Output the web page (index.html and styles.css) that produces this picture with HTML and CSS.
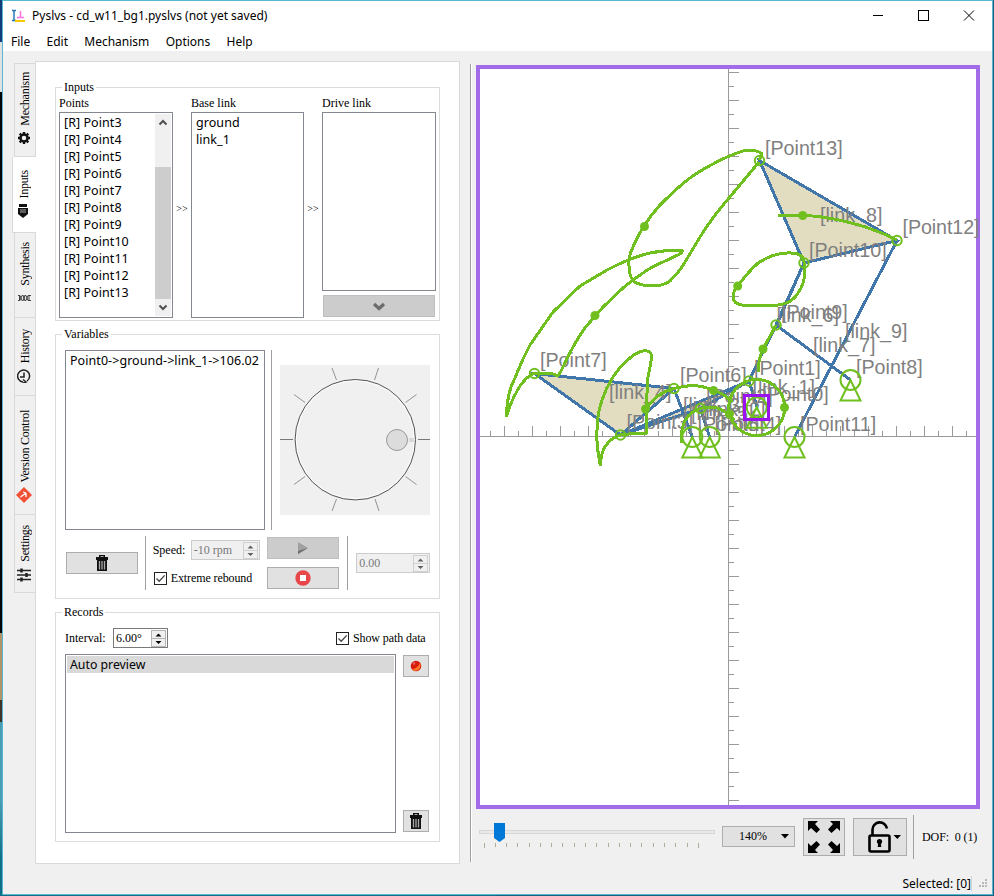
FILE: index.html
```html
<!DOCTYPE html>
<html lang="en">
<head>
<meta charset="utf-8">
<title>Pyslvs</title>
<link rel="stylesheet" href="styles.css">
</head>
<body>
<svg width="0" height="0" class="defs">
  <defs>
    <g id="trash"><path fill="#111" d="M4 0h6v2h3v3H1V2h3zM5.500 1.200v.8h3v-.8zM2 5h10v11H2z"/><path stroke="#aaa" stroke-width="1.300" d="M4.500 6v8.500M7 6v8.500M9.500 6v8.500"/></g>
    <g id="check"><rect x=".5" y=".5" width="12" height="12" fill="#fff" stroke="#222"/><path d="M2.500 6.500l2.700 2.700 5.500-5.800" fill="none" stroke="#444" stroke-width="1.300"/></g>
    <g id="ground" fill="none"><circle r="10"/><path d="M0 0L-10 20.500H10z"/></g>
  </defs>
</svg>
<div class="window">
  <header class="titlebar">
    <svg class="logo" width="13" height="14" viewBox="0 0 13 14"><path d="M0 1.500h4M2 1v11M0 11.500h4" stroke="#2878b8" fill="none" stroke-width="1.500"/><path d="M8.500 2v6M5 8.500h7" stroke="#ff70e0" stroke-width="1.500"/><path d="M3 12h10" stroke="#f5c800" stroke-width="2"/></svg>
    <span class="caption">Pyslvs - cd_w11_bg1.pyslvs (not yet saved)</span>
    <svg class="winbtns" width="104" height="12" viewBox="0 0 104 12" fill="none" stroke="#000"><path d="M0 5.500h10"/><rect x="45.500" y=".5" width="10" height="10"/><path d="M91 .5l10 10M101 .5l-10 10"/></svg>
  </header>
  <nav class="menu"><span class="m1">File</span><span class="m2">Edit</span><span class="m3">Mechanism</span><span class="m4">Options</span><span class="m5">Help</span></nav>

  <main class="main">
    <div class="tabs">
      <div class="tab t1"><span>Mechanism</span><svg width="12" height="12" viewBox="-6 -6 12 12"><circle r="3.500" fill="none" stroke="#111" stroke-width="2.400"/><path d="M0-6v2M0 4v2M-6 0h2M4 0h2M-4.300-4.300l1.500 1.500M2.800 2.800l1.500 1.500M4.300-4.300L2.800-2.800M-2.800 2.800l-1.500 1.500" stroke="#111" stroke-width="2.400"/></svg></div>
      <div class="tab t2 active"><span>Inputs</span><svg width="10" height="14" viewBox="0 0 10 14"><path d="M1 0h8v3H1zM0 4h10v6l-5 4-5-4z" fill="#111"/><path d="M3 5v4M5 5v4M7 5v4" stroke="#aaa"/></svg></div>
      <div class="tab t3"><span>Synthesis</span><svg width="13" height="6" viewBox="0 0 13 6"><path d="M0 .5h2l2 5h1l2-5h1l2 5h3M0 5.500h2l2-5h1l2 5h1l2-5h3M1.500 0v6M6 0v6M11 0v6" fill="none" stroke="#444"/></svg></div>
      <div class="tab t4"><span>History</span><svg width="14" height="14" viewBox="0 0 14 14"><path d="M4 12A6 6 0 1 1 8 13M7 3.500V8h4M8 10.500L5 13l3 1" fill="none" stroke="#222" stroke-width="1.500" transform="matrix(-1 0 0 1 14 0)"/></svg></div>
      <div class="tab t5"><span>Version Control</span><svg width="16" height="16" viewBox="0 0 16 16"><path d="M8 0l8 8-8 8-8-8z" fill="#f05033"/><path d="M4.500 10L10 6M10 6L7 5M10 6v4" stroke="#fff" stroke-width="1.300"/></svg></div>
      <div class="tab t6"><span>Settings</span><svg width="14" height="14" viewBox="0 0 14 14"><path d="M0 2.500h14M0 7h14M0 11.500h14" stroke="#222" stroke-width="1.500"/><path d="M4.500.5v4M9.500 5v4M4.500 9.500v4" stroke="#222" stroke-width="2.500"/></svg></div>
    </div>

    <section class="panel">
      <div class="group inputs">
        <div class="legend">Inputs</div>
        <div class="col">
          <div class="lab">Points</div>
          <div class="list points">
            <div class="rows"><div>[R] Point3</div><div>[R] Point4</div><div>[R] Point5</div><div>[R] Point6</div><div>[R] Point7</div><div>[R] Point8</div><div>[R] Point9</div><div>[R] Point10</div><div>[R] Point11</div><div>[R] Point12</div><div>[R] Point13</div></div>
            <div class="scroll">
              <svg width="16" height="17" viewBox="0 0 16 17"><path d="M4.500 10.500L8 7l3.500 3.500" fill="none" stroke="#505050" stroke-width="2"/></svg>
              <div class="thumb"></div>
              <svg width="16" height="17" viewBox="0 0 16 17"><path d="M4.500 6.500L8 10l3.500-3.500" fill="none" stroke="#505050" stroke-width="2"/></svg>
            </div>
          </div>
        </div>
        <div class="arrows">&gt;&gt;</div>
        <div class="col base"><div class="lab">Base link</div><div class="list"><div class="rows"><div>ground</div><div>link_1</div></div></div></div>
        <div class="arrows">&gt;&gt;</div>
        <div class="col drive"><div class="lab">Drive link</div><div class="list"></div>
          <div class="btn off"><svg width="14" height="9" viewBox="0 0 14 9"><path d="M2 2l5 4.500L12 2" fill="none" stroke="#6c6c6c" stroke-width="3.200"/></svg></div></div>
      </div>

      <div class="group variables">
        <div class="legend">Variables</div>
        <div class="upper">
          <div class="list var"><div class="rows"><div>Point0-&gt;ground-&gt;link_1-&gt;106.02</div></div></div>
          <div class="vline"></div>
          <svg class="dial" width="150" height="150" viewBox="0 0 150 150">
            <rect width="150" height="150" fill="#f0f0f0"/>
            <circle cx="75.300" cy="74.700" r="59" fill="none" stroke="#fff"/>
            <circle cx="75.300" cy="74.700" r="60.200" fill="none" stroke="#555"/>
            <path d="M0 74.500h13M138 74.500h12" stroke="#777"/>
            <path d="M52 3l4.500 12M98.500 3l-4 12M14 29.500l11 8M136.500 29.500l-11 8M14 119.500l11-8M136.500 119.500l-11-8M52 146l4.500-12M99 146l-4-12" stroke="#888" stroke-width=".9"/>
            <path d="M129 75h5" stroke="#d8d8d8" stroke-width="4"/>
            <circle cx="117" cy="75" r="10.500" fill="#dcdcdc" stroke="#999"/>
          </svg>
        </div>
        <div class="lower">
          <div class="btn del"><svg width="14" height="16" viewBox="0 0 14 16"><use href="#trash"/></svg></div>
          <div class="vline"></div>
          <div class="speed">
            <div class="line"><span class="l-speed">Speed:</span><div class="spin off"><span>-10 rpm</span><i class="step"><svg width="13" height="16" viewBox="0 0 13 16"><path d="M6.500 2.500l3 3h-6zM6.500 13l3-3h-6z"/></svg></i></div></div>
            <div class="line"><svg width="13" height="13"><use href="#check"/></svg><span class="l-ext">Extreme rebound</span></div>
          </div>
          <div class="play">
            <div class="btn off"><svg width="10" height="12" viewBox="0 0 10 12"><path d="M0 0l10 6-10 6z" fill="#a0a0a0"/><path d="M0 9l10-3-10 6z" fill="#707070"/></svg></div>
            <div class="btn"><svg width="16" height="16" viewBox="0 0 16 16"><circle cx="8" cy="8" r="7.700" fill="#e8474a"/><rect x="5" y="5" width="6" height="6" fill="#fff"/></svg></div>
          </div>
          <div class="vline v2"></div>
          <div class="spin off value"><span>0.00</span><i class="step"><svg width="13" height="16" viewBox="0 0 13 16"><path d="M6.500 2.500l3 3h-6zM6.500 13l3-3h-6z"/></svg></i></div>
        </div>
      </div>

      <div class="group records">
        <div class="legend">Records</div>
        <div class="recbar"><span class="l-int">Interval:</span><div class="spin"><span>6.00°</span><i class="step"><svg width="13" height="16" viewBox="0 0 13 16"><path d="M6.500 2.500l3 3h-6zM6.500 13l3-3h-6z"/></svg></i></div><div class="show"><svg width="13" height="13"><use href="#check"/></svg><span class="l-show">Show path data</span></div></div>
        <div class="recbody">
          <div class="list"><div class="sel">Auto preview</div></div>
          <div class="recbtns">
            <div class="btn"><svg width="12" height="12" viewBox="0 0 12 12"><circle cx="6" cy="6" r="5.300" fill="#d81c0c"/><path d="M2 9.500Q8 8 10 3a5.300 5.300 0 0 1-8 6.500z" fill="#ff7a2a"/><circle cx="4" cy="3.500" r="1.300" fill="#e86060"/></svg></div>
            <div class="btn"><svg width="14" height="16" viewBox="0 0 14 16"><use href="#trash"/></svg></div>
          </div>
        </div>
      </div>
    </section>

    <div class="splitter"></div>

    <section class="view">
      <div class="canvas">
        <svg width="500" height="736" viewBox="480 69 500 736">
          <path id="axes" stroke="#9a9a9e" fill="none" shape-rendering="crispEdges"/>
          <g fill="#e2dcc0" stroke="#4176ab" stroke-width="3" shape-rendering="crispEdges">
            <path d="M759.500 160.500L897 240.500 804 263z"/>
            <path d="M534.500 373.500L674 388.500 620.500 435z"/>
            <path d="M620.500 435L749 381 700.500 408.500z"/>
            <path fill="none" d="M897 240.500L794.500 437M776 325L850.500 380M804 263L776 325 749 381M804 263L775 329M749 381L757 407M674 388.500L692.300 437M700.500 408.500L709.700 437"/>
          </g>
          <g class="labels">
            <text x="765" y="155">[Point13]</text><text x="902.500" y="234" textLength="77">[Point12]</text><text x="809" y="257">[Point10]</text>
            <text x="820" y="222">[link_8]</text><text x="781" y="318.500">[Point9]</text><text x="776.500" y="322">[link_6]</text>
            <text x="845" y="338">[link_9]</text><text x="813" y="352">[link_7]</text><text x="856" y="373.500">[Point8]</text>
            <text x="754" y="375">[Point1]</text><text x="680" y="381.500">[Point6]</text><text x="752.500" y="393.500">[link_1]</text>
            <text x="762" y="401">[Point0]</text><text x="800" y="431">[Point11]</text><text x="714.500" y="431">[Point4]</text>
            <text x="697.500" y="431">[Point5]</text><text x="706" y="403">[Point2]</text><text x="703" y="416">[link_2]</text>
            <text x="683" y="412">[link_3]</text><text x="691" y="420">[link_5]</text><text x="626.500" y="428.500">[Point3]</text>
            <text x="609" y="399">[link_4]</text><text x="540" y="367">[Point7]</text>
          </g>
          <g fill="none" stroke="#6fbf1f" stroke-width="3" stroke-linejoin="round" shape-rendering="crispEdges">
            <path d="M759.500 160L762 154C759 150 752 150 743 151C736 153 732 155 727 157C714 163 701 170 690 178C679 186 669 196 660 205Q651 215 644 226Q637 237 633 247Q628 257 629 266Q629 276 634 282Q643 286 653 286Q663 286 670 281Q677 274 682 267L700 237Q714 215 729 198L759 162"/>
            <path d="M506.500 417Q507 392 515 378Q521 362 530 345L553 312 580 286 607 270Q632 257 650 253Q664 250 681 250.500Q684 251 680 254L663 262Q651 267 643 273Q632 280 623 288L603 307 584 329Q572 347 563 367Q560 374 557 376Q552 373 549 373L534.500 373Q527 376 520 386Q511 400 506.500 417"/>
            <path d="M600.500 466Q596 445 597 430Q597 415 602 400Q606 388 613 377Q621 365 630 358Q637 352 643 351Q651 350 651.500 356Q651 364 648 377L646 409V433.500H633L620.500 435Q611 438 607 444Q601 450 600.500 466"/>
            <path d="M645 410Q656 393 674 388.500C692 384 700 385 713 390Q725 394 732 402"/>
            <path d="M681.500 443Q680 426 688 416Q701 404 717 408Q726 411 734 420"/>
            <circle cx="756.700" cy="407.500" r="28"/>
            <path d="M776 325L763 349Q758 360 758.300 372"/>
            <path d="M737.700 286Q748 272 757 264Q770 254 787 253Q803 252 804 262Q807 281 798 293Q791 305 773 305.500H745Q732 304 733.500 297Q733 290 737.700 286z"/>
            <path d="M777.500 215.500H803C826 216 863 223 897 240"/>
          </g>
          <g fill="none" stroke="#6fbf1f" stroke-width="2">
            <circle cx="759.500" cy="160.500" r="4.700"/><circle cx="897" cy="240.500" r="4.700"/><circle cx="804" cy="263" r="4.700"/><circle cx="776" cy="325" r="4.700"/><circle cx="534.500" cy="373.500" r="4.700"/><circle cx="674" cy="388.500" r="4.700"/><circle cx="620.500" cy="435" r="4.700"/><circle cx="749" cy="381" r="4.700"/><circle cx="700.500" cy="408.500" r="4.700"/>
            <use href="#ground" x="850.500" y="380"/><use href="#ground" x="794.500" y="437"/><use href="#ground" x="692.300" y="437"/><use href="#ground" x="709.700" y="437"/><use href="#ground" x="756.700" y="407.300"/>
          </g>
          <g fill="#6fbf1f"><circle cx="644.500" cy="226.500" r="4.500"/><circle cx="595" cy="315.500" r="4.500"/><circle cx="645.500" cy="409" r="4.500"/><circle cx="713.500" cy="390.500" r="4.500"/><circle cx="729.500" cy="414" r="4.500"/><circle cx="784.500" cy="407.500" r="4.500"/><circle cx="763" cy="349" r="4.500"/><circle cx="737.700" cy="286" r="4.500"/><circle cx="802.700" cy="215.500" r="4.500"/></g>
          <rect x="744.500" y="395.500" width="24" height="24" fill="none" stroke="#9a12f0" stroke-width="3"/>
        </svg>
      </div>
      <div class="controls">
        <svg class="slider" width="236" height="30" viewBox="479 820 236 30"><rect x="479.500" y="830.500" width="235" height="3" fill="#e7eaea" stroke="#d6d6d6"/><path id="ticks" stroke="#b0ac9c" fill="none" shape-rendering="crispEdges"/><path d="M494 823h11v15l-5.500 4-5.500-4z" fill="#0078d7"/></svg>
        <div class="btn zoomsel"><span>140%</span><svg width="8" height="5" viewBox="0 0 8 5"><path d="M0 0h8L4 4.500z"/></svg></div>
        <div class="btn fit"><svg width="32" height="32" viewBox="0 0 32 32"><path d="M0 0h10L7 3l5 5.500L8.500 12 3 7 0 10z"/><path transform="matrix(-1 0 0 1 32 0)" d="M0 0h10L7 3l5 5.500L8.500 12 3 7 0 10z"/><path transform="matrix(1 0 0 -1 0 32)" d="M0 0h10L7 3l5 5.500L8.500 12 3 7 0 10z"/><path transform="matrix(-1 0 0 -1 32 32)" d="M0 0h10L7 3l5 5.500L8.500 12 3 7 0 10z"/></svg></div>
        <div class="btn lock"><svg width="34" height="32" viewBox="0 0 34 32"><rect x="1.500" y="14.500" width="20" height="16" rx="1.500" fill="none" stroke="#000" stroke-width="2.600"/><path d="M4.500 14V8.500a7.300 7.300 0 0 1 14.500-1" fill="none" stroke="#000" stroke-width="2.600"/><circle cx="11.500" cy="20.500" r="2.600"/><path d="M10.300 21h2.400l.6 5h-3.600z"/><path d="M25.500 14h7.500l-3.700 4z"/></svg></div>
        <div class="vline"></div>
        <span class="dof">DOF:&nbsp; 0 (1)</span>
      </div>
    </section>
  </main>
  <footer class="status"><span>Selected: [0]</span><svg width="9" height="9" viewBox="0 0 9 9" fill="#b8b8b8"><path d="M6 0h2v2H6zM3 3h2v2H3zM6 3h2v2H6zM0 6h2v2H0zM3 6h2v2H3zM6 6h2v2H6z"/></svg></footer>
</div>
<script src="axes.js"></script>
</body>
</html>
```
FILE: styles.css
```css
* { box-sizing: border-box; }
body {
  margin: 0;
  height: 896px;
  padding: 0 1px 1px 2px;
  overflow: hidden;
  background: linear-gradient(90deg, transparent 50%, #12607c 50%), linear-gradient(#123c78 0 42px, #e0e0e0 42px 92px, #05050a 92px 633px, #b09468 633px 700px, #40342a 700px 722px, #4a9db0 722px 800px, #0f6f88 860px);
  color: #000;
  font: 12px/15px "Liberation Serif", serif;
}
svg { display: block; flex: none; }
.defs { position: absolute; }
.window {
  height: 895px;
  border: 1px solid #58b6d0;
  background: #f0f0f0;
  display: flex;
  flex-direction: column;
}
.titlebar, .menu, .rows, .sel, .status { font-family: "Noto Sans", sans-serif; font-size: 12px; }
.titlebar { height: 30px; background: #fff; display: flex; align-items: center; padding-left: 9px; }
.caption { margin: -2px 0 0 7px; white-space: nowrap; }
.winbtns { margin: 0 15px 0 auto; }
.menu { height: 20px; background: #fff; display: flex; align-items: center; padding-left: 8px; gap: 16.300px; }
.main { display: flex; height: 822px; }

.tabs { width: 23px; margin: 12px 0 0 9px; position: relative; z-index: 1; }
.tab {
  width: 21px;
  margin-left: 2px;
  border: 1px solid #d9d9d9;
  border-width: 0 0 1px 1px;
  display: flex;
  flex-direction: column;
  align-items: center;
  justify-content: flex-end;
  gap: 6px;
  padding: 0 2px 12px 0;
}
.tab span { writing-mode: vertical-rl; transform: rotate(180deg); margin-right: -2px; white-space: nowrap; line-height: 18px; letter-spacing: -.25px; }
.t1 { height: 94px; border-top-width: 1px; }
.t2 { height: 76px; padding-bottom: 14px; }
.t3 { height: 85px; padding-bottom: 16px; gap: 9px; }
.t4 { height: 78px; }
.t5 { height: 119px; gap: 4px; padding-bottom: 11px; }
.t6 { height: 78px; padding-bottom: 10px; }
.tab.active { background: #fff; width: 24px; margin-left: 0; padding-right: 3px; }

.panel { width: 425px; height: 803px; margin-top: 10px; padding: 25px 0 0 19px; border: 1px solid #d9d9d9; background: #fff; flex: none; }
.group { position: relative; width: 385px; margin-bottom: 13px; border: 1px solid #dcdcdc; }
.legend { position: absolute; left: 6px; top: -8px; padding: 0 2px; background: #fff; line-height: 15px; }
.list { border: 1px solid #828790; background: #fff; }
.rows { padding: 1px 0 0 4px; line-height: 17px; white-space: nowrap; font-size: 12.500px; letter-spacing: .06px; }
.btn { height: 22px; border: 1px solid #adadad; background: #e1e1e1; display: flex; align-items: center; justify-content: center; }
.btn.off { background: #ccc; border-color: #bfbfbf; }
.vline { width: 1px; background: #a0a0a0; }

.inputs { height: 234px; display: flex; padding: 7px 3px 2px; }
.lab { height: 17px; line-height: 16px; }
.col { width: 114px; display: flex; flex-direction: column; }
.base { width: 113px; }
.col .list { flex: 1; }
.points { display: flex; justify-content: space-between; }
.scroll { width: 16px; margin: 1px 1px; background: #f0f0f0; display: flex; flex-direction: column; }
.thumb { height: 132px; margin: auto 0 0; background: #cdcdcd; }
.arrows { width: 18px; text-align: center; line-height: 15px; padding-top: 106px; font-size: 10px; }
.drive .btn { margin: 4px 1px 1px; }

.variables { height: 265px; padding: 15px 9px 0; }
.upper { display: flex; height: 180px; }
.var { width: 200px; }
.upper .vline { margin: 0 8px 0 6px; }
.dial { margin-top: 15px; }
.lower { display: flex; height: 54px; margin-top: 6px; }
.del { width: 72px; margin: 16px 7px 0 1px; }
.speed { width: 107px; margin: 4px 7px 0 7px; }
.line { display: flex; align-items: center; height: 20px; }
.line + .line { margin: 8px 0 0 1px; gap: 4px; white-space: nowrap; letter-spacing: -.1px; }
.spin { height: 20px; border: 1px solid #7a7a7a; background: #fff; display: flex; align-items: center; justify-content: space-between; padding: 0 1px 0 2px; }
.spin .step { width: 15px; height: 17px; border: 1px solid #b4b4b4; background: linear-gradient(#f0f0f0 0 7px, #b4b4b4 7px 8px, #f0f0f0 8px); overflow: hidden; }
.spin.off { background: #f0f0f0; border-color: #ccc; color: #787878; }
.off .step { border-color: #d0d0d0; fill: #606060; background: linear-gradient(#f0f0f0 0 7px, #d0d0d0 7px 8px, #f0f0f0 8px); }
.l-speed { width: 38px; }
.line .spin { width: 69px; }
.play { width: 73px; display: flex; flex-direction: column; gap: 8px; padding-top: 1px; }
.vline.v2 { margin: 0 8px 0 7px; }
.lower .v2 { margin-left: 8px; }
.value { width: 74px; margin-top: 17px; }

.records { height: 230px; padding: 15px 9px 0; }
.recbar { height: 20px; display: flex; align-items: center; }
.recbar .spin { width: 55px; }
.l-int { width: 48px; }
.show { display: flex; align-items: center; gap: 4px; margin-left: 168px; white-space: nowrap; letter-spacing: -.1px; }
.recbody { display: flex; height: 179px; margin-top: 6px; }
.recbody .list { width: 331px; padding: 1px; }
.sel { height: 17px; line-height: 17px; padding-left: 3px; background: #d9d9d9; font-size: 12.300px; }
.recbtns { width: 26px; margin: 1px 0 1px 7px; display: flex; flex-direction: column; justify-content: space-between; }

.splitter { width: 2px; height: 798px; margin: 13px 4px 0 10px; border-left: 1px solid #a0a0a0; background: #fff; flex: none; }
.view { width: 504px; margin-top: 14px; flex: none; }
.canvas { height: 744px; border: 4px solid #a26be8; background: #fff; }
.canvas svg { overflow: hidden; }
.labels { font: 19.700px "Liberation Sans", sans-serif; fill: #808080; }
.controls { display: flex; align-items: center; height: 44px; margin-top: 6px; padding-left: 3px; }
.slider { margin-bottom: 4px; }
.zoomsel { width: 73px; height: 21px; margin: 0 0 1px 7px; padding: 0 5px 0 16px; justify-content: space-between; }
.fit { width: 42px; height: 38px; margin-left: 8px; }
.lock { width: 54px; height: 38px; margin-left: 8px; padding-left: 9px; }
.controls .vline { height: 44px; margin: 0 8px 0 6px; }
.dof { white-space: nowrap; letter-spacing: -.1px; }
.status { display: flex; align-items: center; justify-content: flex-end; gap: 7px; height: 21px; padding-right: 4px; }
.status span { border-right: 1px solid #d4d4d4; white-space: nowrap; }
```
FILE: axes.js
```js
// Ruler marks: every 14px, longer on even steps.
let d = "M480 436.500H976M728.500 69V805";
for (let i = -26; i <= 26; i++) {
  const len = i % 2 ? 5 : 10;
  d += `M728 ${436.5 + i * 14}h${len + 1}`;
  if (Math.abs(i) < 18) d += `M${728.5 + i * 14} 436v${-len}`;
}
document.getElementById("axes").setAttribute("d", d);

let t = "";
for (let i = 0; i < 20; i++) t += `M${Math.floor(484 + i * 11.28) + 0.5} 843v${i === 0 || i === 19 ? 5 : 4}`;
document.getElementById("ticks").setAttribute("d", t);
```
